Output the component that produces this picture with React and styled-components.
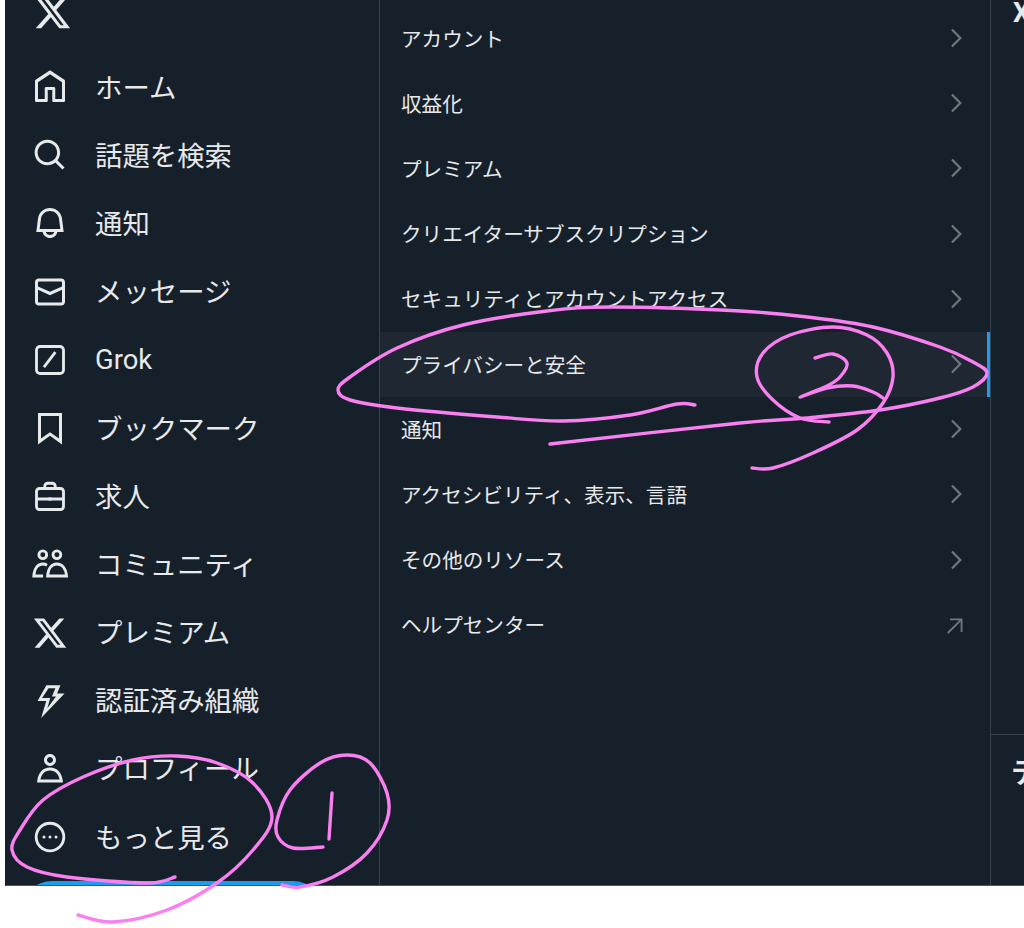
import styled, { createGlobalStyle } from "styled-components";

const GlobalStyle = createGlobalStyle`
  html, body {
    margin: 0;
    padding: 0;
    background: #fff;
  }
  body {
    font-family: Roboto, "Noto Sans CJK JP", sans-serif;
    height: 928px;
    overflow: hidden;
    position: relative;
  }
`;

const Frame = styled.div`
  margin-left: 5px;
  width: 1019px;
  height: 886px;
  box-sizing: border-box;
  display: flex;
  overflow: hidden;
  background: #16202a;
  border-bottom: 1px solid #4b5560;
  color: #e7e9ea;
`;

const Sidebar = styled.nav`
  width: 375px;
  flex: none;
  box-sizing: border-box;
  border-right: 1px solid #38444d;
  display: flex;
  flex-direction: column;
`;

const Logo = styled.div`
  margin-top: -7px;
  height: 60px;
  padding-left: 28px;
  flex: none;
  svg {
    width: 39px;
    height: 39px;
    display: block;
    fill: #e7e9ea;
  }
`;

const NavRow = styled.div`
  height: 68.2px;
  flex: none;
  display: flex;
  align-items: center;
  padding-left: 27px;
  font-size: 27.4px;
  svg {
    width: 36px;
    height: 36px;
    flex: none;
    margin-right: 27px;
    fill: #e7e9ea;
  }
`;

const NavLabel = styled.span`
  padding-bottom: ${(p) => (p.$latin ? 0 : 3)}px;
`;

const PostButton = styled.div`
  margin: 10px 0 0 17px;
  width: 301px;
  height: 60px;
  flex: none;
  border-radius: 30px;
  background: #1d9bf0;
`;

const Menu = styled.div`
  width: 611px;
  flex: none;
  box-sizing: border-box;
  border-right: 1px solid #38444d;
  padding-top: 6px;
  display: flex;
  flex-direction: column;
`;

const MenuRow = styled.div`
  height: 65.2px;
  flex: none;
  box-sizing: border-box;
  display: flex;
  align-items: center;
  justify-content: space-between;
  padding: 0 ${(p) => (p.$active ? 18 : 21)}px 0 21px;
  font-size: 20.6px;
  background: ${(p) => (p.$active ? "#1f2732" : "transparent")};
  border-right: ${(p) => (p.$active ? "3px solid #1d9bf0" : "none")};
  span {
    padding-bottom: 2px;
  }
  svg {
    width: 26px;
    height: 26px;
    flex: none;
    margin-bottom: 1px;
    fill: #71767b;
  }
`;

const Aside = styled.div`
  flex: 1;
  min-width: 0;
  display: flex;
  flex-direction: column;
`;

const AsideTop = styled.div`
  height: 735px;
  flex: none;
  box-sizing: border-box;
  border-bottom: 1px solid #38444d;
  padding-left: 22px;
  font-size: 27px;
  font-weight: 700;
  line-height: 27px;
  white-space: nowrap;
`;

const AsideTitle = styled.div`
  padding: 24px 0 0 20px;
  font-size: 28px;
  font-weight: 700;
  line-height: 30px;
  white-space: nowrap;
`;

const Scribble = styled.svg`
  position: absolute;
  left: 0;
  top: 0;
  pointer-events: none;
  path {
    fill: none;
    stroke: #fa7ff0;
    stroke-width: 3.4;
    stroke-linecap: round;
    stroke-linejoin: round;
  }
`;

const XPath = "M18.244 2.25h3.308l-7.227 8.26 8.502 11.24H16.17l-5.214-6.817L4.99 21.75H1.68l7.73-8.835L1.254 2.25H8.08l4.713 6.231zm-1.161 17.52h1.833L7.084 4.126H5.117z";

const icons = {
  home: <path d="M21.591 7.146L12.52 1.157c-.316-.21-.724-.21-1.04 0l-9.071 5.99c-.26.173-.409.456-.409.757v13.183c0 .502.418.913.929.913h6.638c.511 0 .929-.41.929-.913v-7.075h3.008v7.075c0 .502.418.913.929.913h6.639c.51 0 .928-.41.928-.913V7.904c0-.301-.158-.584-.408-.758zM20 20l-4.5.01.011-7.097c0-.502-.418-.913-.928-.913H9.44c-.511 0-.929.41-.929.913L8.5 20H4V8.773l8.011-5.342L20 8.764z" />,
  search: <path d="M10.25 3.75c-3.59 0-6.5 2.91-6.5 6.5s2.91 6.5 6.5 6.5c1.795 0 3.419-.726 4.596-1.904 1.178-1.177 1.904-2.801 1.904-4.596 0-3.59-2.91-6.5-6.5-6.5zm-8.5 6.5c0-4.694 3.806-8.5 8.5-8.5s8.5 3.806 8.5 8.5c0 1.986-.682 3.815-1.824 5.262l4.781 4.781-1.414 1.414-4.781-4.781c-1.447 1.142-3.276 1.824-5.262 1.824-4.694 0-8.5-3.806-8.5-8.5z" />,
  bell: <path d="M19.993 9.042C19.48 5.017 16.054 2 11.996 2s-7.49 3.021-7.999 7.051L2.866 18H7.1c.463 2.282 2.481 4 4.9 4s4.437-1.718 4.9-4h4.236l-1.143-8.958zM12 20c-1.306 0-2.417-.835-2.829-2h5.658c-.412 1.165-1.523 2-2.829 2zm-6.866-4l.847-6.698C6.364 6.272 8.941 4 11.996 4s5.627 2.268 6.013 5.295L18.864 16H5.134z" />,
  mail: <path d="M1.998 5.5c0-1.381 1.119-2.5 2.5-2.5h15c1.381 0 2.5 1.119 2.5 2.5v13c0 1.381-1.119 2.5-2.5 2.5h-15c-1.381 0-2.5-1.119-2.5-2.5v-13zm2.5-.5c-.276 0-.5.224-.5.5v2.764l8 3.638 8-3.636V5.5c0-.276-.224-.5-.5-.5h-15zm15.5 5.463l-8 3.636-8-3.638V18.5c0 .276.224.5.5.5h15c.276 0 .5-.224.5-.5v-8.037z" />,
  grok: (
    <g fill="none" stroke="#e7e9ea" strokeWidth="1.9">
      <rect x="3" y="3" width="18" height="18" rx="2.4" />
      <path d="M8.5 16 15 7.5" strokeLinecap="square" />
    </g>
  ),
  bookmark: <path d="M4 2h16v20.94l-8-5.71-8 5.71V2zM6 4v15.06l6-4.29 6 4.29V4H6z" />,
  jobs: (
    <g fill="none" stroke="#e7e9ea" strokeWidth="1.9">
      <rect x="3" y="7" width="18" height="14" rx="2" />
      <path d="M8.5 7V5.5A2 2 0 0 1 10.5 3.5h3a2 2 0 0 1 2 2V7M3 14h18" />
      <path d="M12 13v2" strokeWidth="2.2" />
    </g>
  ),
  people: (
    <g fill="none" stroke="#e7e9ea" strokeWidth="1.9">
      <circle cx="7.2" cy="5.8" r="2.6" />
      <circle cx="16.6" cy="5.8" r="2.6" />
      <path d="M10.4 20H16.6H23C22.6 14.8 20 12 16.6 12S10.7 14.8 10.4 20Z" />
      <path d="M7.4 20H1.2C1.5 14.8 4 12 7.2 12c1 0 2 .3 2.8 .8" />
    </g>
  ),
  x: <path d={XPath} />,
  bolt: <path d="M9.6 1.5h9.4l-2.3 5.5h5L6.1 23.4l3.4-11.4H3.7zm1.4 2L6.7 10h5.5l-2 6.8L16 9h-2.7l2.3-5.5z" />,
  user: <path d="M5.651 19h12.698c-.337-1.8-1.023-3.21-1.945-4.19C15.318 13.65 13.838 13 12 13s-3.317.65-4.404 1.81c-.922.98-1.608 2.39-1.945 4.19zm.486-5.56C7.627 11.85 9.648 11 12 11s4.373.85 5.863 2.44c1.477 1.58 2.366 3.8 2.632 6.46l.11 1.1H3.395l.11-1.1c.266-2.66 1.155-4.88 2.632-6.46zM12 4c-1.105 0-2 .9-2 2s.895 2 2 2 2-.9 2-2-.895-2-2-2zM8 6c0-2.21 1.791-4 4-4s4 1.79 4 4-1.791 4-4 4-4-1.79-4-4z" />,
  more: (
    <g>
      <circle cx="12" cy="12" r="9.2" fill="none" stroke="#e7e9ea" strokeWidth="1.9" />
      <circle cx="8" cy="12" r="1" />
      <circle cx="12" cy="12" r="1" />
      <circle cx="16" cy="12" r="1" />
    </g>
  ),
};

const navItems = [
  ["home", "ホーム"],
  ["search", "話題を検索"],
  ["bell", "通知"],
  ["mail", "メッセージ"],
  ["grok", "Grok"],
  ["bookmark", "ブックマーク"],
  ["jobs", "求人"],
  ["people", "コミュニティ"],
  ["x", "プレミアム"],
  ["bolt", "認証済み組織"],
  ["user", "プロフィール"],
  ["more", "もっと見る"],
];

const menuItems = [
  "アカウント",
  "収益化",
  "プレミアム",
  "クリエイターサブスクリプション",
  "セキュリティとアカウントアクセス",
  "プライバシーと安全",
  "通知",
  "アクセシビリティ、表示、言語",
  "その他のリソース",
];

// hand drawn marks, traced from the picture
const strokes = [
  [[175,877],[147,883],[67,877],[27,867],[12,850],[20,830],[43,800],[83,777],[133,760],[177,756],[217,763],[253,783],[272,817],[253,850],[217,883],[167,910],[113,922],[78,915]],
  [[323,847],[293,848],[278,837],[277,820],[290,790],[320,763],[347,755],[370,763],[387,793],[387,820],[367,853],[333,877],[300,887],[282,885]],
  [[332,793],[329,839]],
  [[695,405],[677,404],[630,415],[563,421],[497,417],[397,408],[350,400],[338,390],[350,377],[397,348],[463,325],[547,311],[613,307],[740,311],[807,317],[873,327],[940,347],[973,362],[987,373],[973,387],[940,398],[880,410],[807,418],[740,423],[550,444]],
  [[829,422],[800,418],[773,400],[757,377],[763,353],[790,335],[833,327],[867,335],[887,353],[893,377],[883,403],[857,430],[813,453],[773,468],[752,468]],
  [[815,358],[833,354],[847,363],[840,377],[827,386],[800,397],[827,388],[853,386],[873,392],[883,398]],
];

function smooth(points) {
  let d = `M${points[0][0]} ${points[0][1]}`;
  for (let i = 0; i < points.length - 1; i++) {
    const p0 = points[i - 1] || points[i];
    const p1 = points[i];
    const p2 = points[i + 1];
    const p3 = points[i + 2] || p2;
    const c1x = p1[0] + (p2[0] - p0[0]) / 6;
    const c1y = p1[1] + (p2[1] - p0[1]) / 6;
    const c2x = p2[0] - (p3[0] - p1[0]) / 6;
    const c2y = p2[1] - (p3[1] - p1[1]) / 6;
    d += `C${c1x} ${c1y} ${c2x} ${c2y} ${p2[0]} ${p2[1]}`;
  }
  return d;
}

export default function App() {
  return (
    <>
      <GlobalStyle />
      <Frame>
        <Sidebar>
          <Logo>
            <svg viewBox="0 0 24 24"><path d={XPath} /></svg>
          </Logo>
          {navItems.map(([icon, label]) => (
            <NavRow key={label}>
              <svg viewBox="0 0 24 24">{icons[icon]}</svg>
              <NavLabel $latin={label === "Grok"}>{label}</NavLabel>
            </NavRow>
          ))}
          <PostButton />
        </Sidebar>
        <Menu>
          {menuItems.map((label, index) => (
            <MenuRow key={label} $active={index === 5}>
              <span>{label}</span>
              <svg viewBox="0 0 24 24">
                <path d="M14.586 12L7.543 4.96l1.414-1.42L17.414 12l-8.457 8.46-1.414-1.42L14.586 12z" />
              </svg>
            </MenuRow>
          ))}
          <MenuRow>
            <span>ヘルプセンター</span>
            <svg viewBox="0 0 24 24">
              <path d="M6.5 6h11.5v12.5h-1.7V8.8L5 20l-1.2-1.2L15.1 7.7H6.5V6z" />
            </svg>
          </MenuRow>
        </Menu>
        <Aside>
          <AsideTop>X</AsideTop>
          <AsideTitle>テ</AsideTitle>
        </Aside>
      </Frame>
      <Scribble width="1024" height="928" viewBox="0 0 1024 928">
        {strokes.map((points, index) => (
          <path key={index} d={smooth(points)} />
        ))}
      </Scribble>
    </>
  );
}
